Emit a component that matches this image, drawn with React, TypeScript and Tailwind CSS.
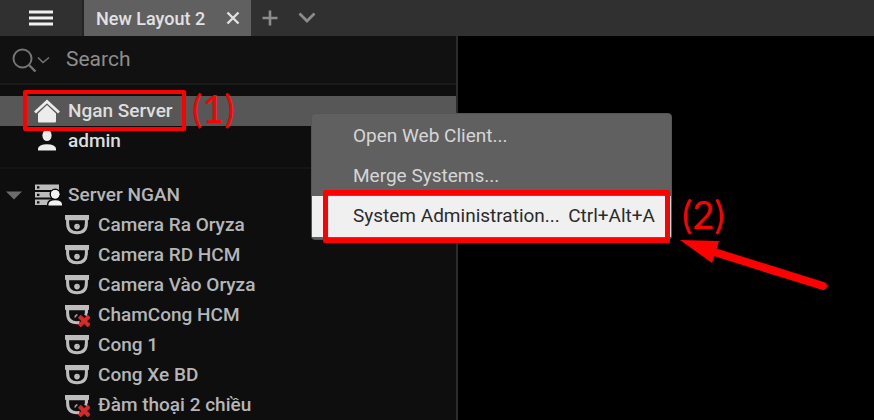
import React from 'react';

type Camera = {
  name: string;
  offline?: boolean;
};

const cameras: Camera[] = [
  { name: 'Camera Ra Oryza' },
  { name: 'Camera RD HCM' },
  { name: 'Camera Vào Oryza' },
  { name: 'ChamCong HCM', offline: true },
  { name: 'Cong 1' },
  { name: 'Cong Xe BD' },
  { name: 'Đàm thoại 2 chiều', offline: true },
];

const HomeIcon = () => (
  <svg width="26" height="24" viewBox="0 0 26 24" fill="none" aria-hidden="true">
    <path d="M1 13.5L13 2.5L25 13.5" stroke="#ececec" strokeWidth="2.8" />
    <path d="M13 6L22 14.4V22.4Q22 23.4 21 23.4H5Q4 23.4 4 22.4V14.4Z" fill="#ececec" />
  </svg>
);

const UserIcon = () => (
  <svg width="26" height="24" viewBox="0 0 26 24" fill="#ececec" aria-hidden="true">
    <ellipse cx="13" cy="6.5" rx="4.6" ry="5.5" />
    <path d="M4 21.4V19.5Q4 17.6 6.5 16.4Q9 15.3 13 15.3Q17 15.3 19.5 16.4Q22 17.6 22 19.5V21.4Z" />
  </svg>
);

const ServerIcon = () => (
  <svg width="28" height="24" viewBox="0 0 28 24" aria-hidden="true">
    <path d="M1 1.5H25V7H1ZM1 9H25V14.5H1ZM1 16.5H25V22H1Z" fill="#bdbdbd" />
    <path d="M3 3.2h2.4v2.2H3zM3 10.7h2.4v2.2H3zM3 18.2h2.4v2.2H3z" fill="#0e0e0e" />
    <g fill="#f2f2f2" stroke="#0e0e0e" strokeWidth="3" paintOrder="stroke">
      <path d="M14.5 22.5V21Q15 17.2 21.3 17.2Q27.6 17.2 28 21V22.5Z" />
      <circle cx="21.2" cy="11.3" r="4.2" />
    </g>
    <circle cx="21.2" cy="11.3" r="4.2" fill="#f2f2f2" />
  </svg>
);

const CameraIcon = ({ offline }: { offline?: boolean }) => (
  <svg width="26" height="24" viewBox="0 0 26 24" fill="none" aria-hidden="true">
    <path d="M1 2H25V6Q25 7.2 23.8 7.2H2.2Q1 7.2 1 6Z" fill="#bdbdbd" />
    <path d="M3.6 6V10Q3.6 19.8 13 19.8Q22.4 19.8 22.4 10V6" stroke="#bdbdbd" strokeWidth="3" />
    {offline ? (
      <>
        <path d="M11 14.5Q11.2 12.4 13.4 11.6" stroke="#9a9a9a" strokeWidth="1.8" />
        <path d="M14 12.5L17 10H26V24H15.5V17Z" fill="#0e0e0e" />
        <path d="M22.4 7Q22.5 10.5 21.6 12.5" stroke="#bdbdbd" strokeWidth="2.8" />
        <path d="M15.3 13.2L25.2 22.9M25.2 13.2L15.3 22.9" stroke="#d62a2a" strokeWidth="4.2" />
      </>
    ) : (
      <>
        <circle cx="13" cy="13.6" r="2.8" fill="#bdbdbd" />
        <circle cx="13.8" cy="12.8" r="0.7" fill="#999999" />
      </>
    )}
  </svg>
);

const TopBar = () => (
  <header className="flex h-9 items-stretch bg-[#303030]">
    <button type="button" aria-label="Main menu" className="flex w-[82px] items-center justify-center">
      <svg width="26" height="18" viewBox="0 0 26 18" fill="none" stroke="#f0f0f0" strokeWidth="3" aria-hidden="true">
        <path d="M1 3H25M1 9H25M1 15H25" />
      </svg>
    </button>
    <div className="flex w-[169px] items-center justify-between border-l-2 border-[#242424] bg-[#606060] pr-[10px] pl-3">
      <span className="text-[18px] font-medium text-[#e2e2e2]">New Layout 2</span>
      <button type="button" aria-label="Close tab">
        <svg width="16" height="14" viewBox="0 0 16 14" fill="none" stroke="#e2e2e2" strokeWidth="2.4" aria-hidden="true">
          <path d="M2.5 1.5L13.5 12.5M13.5 1.5L2.5 12.5" />
        </svg>
      </button>
    </div>
    <button type="button" aria-label="New tab" className="flex w-[38px] items-center justify-center">
      <svg width="16" height="16" viewBox="0 0 16 16" fill="none" stroke="#8c8c8c" strokeWidth="2.6" aria-hidden="true">
        <path d="M0.5 8H15.5M8 0.5V15.5" />
      </svg>
    </button>
    <button type="button" aria-label="Layouts" className="flex w-9 items-center justify-center">
      <svg width="18" height="12" viewBox="0 0 18 12" fill="none" stroke="#8c8c8c" strokeWidth="2.8" aria-hidden="true">
        <path d="M1.5 1.5L9 9L16.5 1.5" />
      </svg>
    </button>
  </header>
);

const SearchBox = () => (
  <div className="flex h-[49px] items-center gap-4 border-b-2 border-[#1a1a1a] bg-[#111111] pl-3">
    <button type="button" aria-label="Search filter">
      <svg width="38" height="24" viewBox="0 0 38 24" fill="none" stroke="#747474" aria-hidden="true">
        <circle cx="10.5" cy="10.5" r="9" strokeWidth="2" />
        <path d="M17 17L23.5 23.5" strokeWidth="2.4" />
        <path d="M26 9.5L31 14.5L37 9.5" strokeWidth="1.6" />
      </svg>
    </button>
    <input
      type="text"
      aria-label="Search"
      placeholder="Search"
      className="min-w-0 flex-1 bg-transparent text-[21px] text-[#8d8d8d] outline-none placeholder:text-[#8d8d8d]"
    />
  </div>
);

const ResourceTree = () => (
  <div className="pt-[11px] text-[19px] font-medium">
    <ul className="text-[#dedede]">
      <li className="relative flex h-[30px] items-center gap-2 bg-[#575757] pl-[34px]">
        <HomeIcon />
        Ngan Server
        <div className="absolute -top-[6px] -bottom-[5px] left-[23px] w-[163px] rounded-xs border-4 border-[#ff0000]" />
        <span className="absolute -top-[3px] left-[192px] font-[family-name:Lato,sans-serif] text-[38px] leading-[30px] font-normal text-[#ff0000]">(1)</span>
      </li>
      <li className="flex h-[30px] items-center gap-2 pl-[34px]">
        <UserIcon />
        admin
      </li>
    </ul>
    <hr className="my-[11px] border-t-2 border-[#151515]" />
    <ul className="text-[#b4b6b8]">
      <li className="flex h-[30px] items-center pl-[6px]">
        <svg width="16" height="9" viewBox="0 0 16 9" fill="#6c6c6c" aria-hidden="true">
          <path d="M0 0.5H16L8 8.5Z" />
        </svg>
        <div className="flex items-center gap-[6px] pl-3">
          <ServerIcon />
          Server NGAN
        </div>
      </li>
      {cameras.map((camera) => (
        <li key={camera.name} className="flex h-[30px] items-center gap-2 pl-16">
          <CameraIcon offline={camera.offline} />
          {camera.name}
        </li>
      ))}
    </ul>
  </div>
);

const ContextMenu = () => (
  <div className="absolute top-[113px] left-[311px] w-[361px] rounded-sm border border-[#555555] bg-[#606060] py-[2px] text-[19px] whitespace-nowrap text-[#d6d6d6]">
    <button type="button" className="flex h-10 w-full items-center pl-[41px]">
      Open Web Client...
    </button>
    <button type="button" className="flex h-10 w-full items-center pl-[41px]">
      Merge Systems...
    </button>
    <button type="button" className="relative flex h-[41px] w-full items-center justify-between bg-[#f0f0f0] pr-4 pl-[41px] text-[#2b2b2b]">
      <span>System Administration...</span>
      <span>Ctrl+Alt+A</span>
      <span className="absolute -top-[6px] -bottom-[6px] left-[11px] w-[347px] rounded-xs border-[5px] border-[#ff0000]" />
    </button>
    <span className="absolute top-[82px] left-[370px] font-[family-name:Lato,sans-serif] text-[38px] leading-[36px] text-[#ff0000]">(2)</span>
    <svg className="absolute top-[124px] left-[366px]" width="150" height="56" viewBox="0 0 150 56" aria-hidden="true">
      <path d="M36 14L145 48" stroke="#ff0000" strokeWidth="8" strokeLinecap="round" />
      <path d="M2 2L41 3L34 25Z" fill="#ff0000" />
    </svg>
  </div>
);

const App = () => {
  return (
    <div className="relative flex min-h-screen flex-col overflow-hidden bg-black font-[Roboto,sans-serif]">
      <TopBar />
      <div className="flex flex-1">
        <aside className="w-[458px] shrink-0 border-r-2 border-[#2b2b2b] bg-[#0e0e0e]">
          <SearchBox />
          <ResourceTree />
        </aside>
        <main className="flex-1 bg-black" />
      </div>
      <ContextMenu />
    </div>
  );
};

export default App;
